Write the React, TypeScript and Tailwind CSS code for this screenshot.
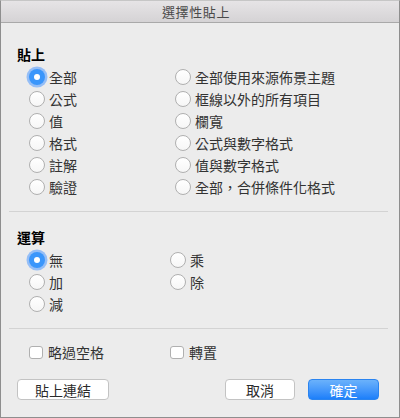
import React from "react";

const font = { fontFamily: '"Noto Sans CJK TC", "Noto Sans", sans-serif' };

function Radio({ label, checked = false }: { label: string; checked?: boolean }) {
  return (
    <div className="flex h-[22px] items-center">
      {checked ? (
        <div className="flex h-[16px] w-[16px] items-center justify-center rounded-full bg-[#3a96fb] shadow-[0_0_0_2.5px_rgba(120,175,250,0.75)]">
          <div className="h-[6px] w-[6px] rounded-full bg-white" />
        </div>
      ) : (
        <div className="h-[16px] w-[16px] rounded-full border border-[#b0b0b0] bg-gradient-to-b from-white to-[#f6f6f6]" />
      )}
      <span className="ml-[4px] text-[14px] leading-none tracking-[0px] text-[#333333]">{label}</span>
    </div>
  );
}

function Check({ label }: { label: string }) {
  return (
    <div className="flex h-[22px] items-center">
      <div className="h-[13px] w-[14px] rounded-[3px] border border-[#b0b0b0] bg-white" />
      <span className="ml-[5px] text-[14px] leading-none text-[#333333]">{label}</span>
    </div>
  );
}

export default function App() {
  return (
    <div
      style={font}
      className="flex h-[418px] w-[400px] flex-col overflow-hidden border border-t-[#c6c6c6] border-x-[#8e8e8e] border-b-[#8e8e8e] bg-[#ececec]"
    >
      <div className="flex h-[22px] shrink-0 items-center justify-center border-b border-[#a9a9a9] bg-gradient-to-b from-[#e6e4e6] to-[#d5d3d5]">
        <span className="mr-[8px] text-[13px] leading-none tracking-[0.6px] text-[#4a4a4a]">選擇性貼上</span>
      </div>

      <div className="flex flex-col">
        <div className="ml-[16px] mt-[23px] h-[16px] text-[14px] font-bold leading-[16px] text-black">貼上</div>
        <div className="ml-[28px] mt-[4px] grid grid-cols-[146px_1fr]">
          <div className="flex flex-col">
            <Radio label="全部" checked />
            <Radio label="公式" />
            <Radio label="值" />
            <Radio label="格式" />
            <Radio label="註解" />
            <Radio label="驗證" />
          </div>
          <div className="flex flex-col">
            <Radio label="全部使用來源佈景主題" />
            <Radio label="框線以外的所有項目" />
            <Radio label="欄寬" />
            <Radio label="公式與數字格式" />
            <Radio label="值與數字格式" />
            <Radio label="全部，合併條件化格式" />
          </div>
        </div>

        <div className="ml-[8px] mr-[11px] mt-[13px] h-px bg-[#d3d3d3]" />

        <div className="ml-[16px] mt-[17px] h-[16px] text-[14px] font-bold leading-[16px] text-black">運算</div>
        <div className="ml-[28px] mt-[4px] grid grid-cols-[141px_1fr]">
          <div className="flex flex-col">
            <Radio label="無" checked />
            <Radio label="加" />
            <Radio label="減" />
          </div>
          <div className="flex flex-col">
            <Radio label="乘" />
            <Radio label="除" />
          </div>
        </div>

        <div className="ml-[8px] mr-[11px] mt-[13px] h-px bg-[#d3d3d3]" />

        <div className="ml-[28px] mt-[12px] grid grid-cols-[141px_1fr]">
          <Check label="略過空格" />
          <Check label="轉置" />
        </div>

        <div className="ml-[16px] mr-[20px] mt-[16px] flex items-center">
          <button className="flex h-[21px] w-[92px] items-center justify-center rounded-[4px] border border-[#c3c3c3] bg-white text-[14px] leading-none text-[#2a2a2a]">
            貼上連結
          </button>
          <div className="flex-1" />
          <button className="flex h-[21px] w-[70px] items-center justify-center rounded-[4px] border border-[#c3c3c3] bg-white text-[14px] leading-none text-[#2a2a2a]">
            取消
          </button>
          <button className="ml-[13px] flex h-[21px] w-[71px] items-center justify-center rounded-[4px] border border-[#2a84f0] bg-gradient-to-b from-[#6bb2fb] to-[#1b7ffa] text-[14px] leading-none text-white">
            確定
          </button>
        </div>
      </div>
    </div>
  );
}
